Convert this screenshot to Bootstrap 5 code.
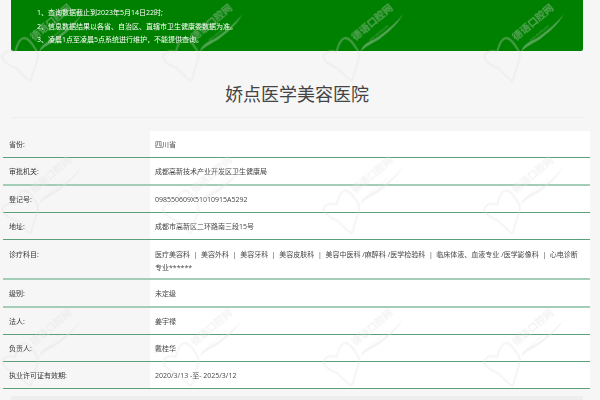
<!DOCTYPE html>
<html lang="zh-CN">
<head>
<meta charset="utf-8">
<title>娇点医学美容医院</title>
<link href="https://cdn.jsdelivr.net/npm/bootstrap@5.3.0/dist/css/bootstrap.min.css" rel="stylesheet">
<style>
html,body{height:400px;overflow:hidden}
body{background:#f6f6f6;font-family:"Open Sans","Noto Sans CJK SC",sans-serif;font-size:7px;color:#444;position:relative}
.notice-box{margin:0 17px 0 11px;height:51px;background:#008000;color:#fff;padding:6px 0 0 26px;line-height:13.5px;font-size:7px;border-radius:0 0 2px 2px}
.notice-box p{margin:0;filter:blur(.25px)}
.hosp-title{height:67px;margin:0 17px 0 11px;border-bottom:1px solid #eee;font-size:18px;line-height:18px;padding-top:33px;color:#444;text-align:center;font-weight:400;font-family:"Noto Sans CJK SC",sans-serif}
.info-wrap{margin:13px 10px 0 3px}
.info-table{--bs-table-bg:transparent;margin:0;font-size:7px;table-layout:fixed;width:100%;border-collapse:separate;border-spacing:0}
.info-table th,.info-table td{padding:1px 0 0;vertical-align:middle;border-bottom:1px solid #5b9f7d;box-shadow:none;height:27px;line-height:13px;color:#444}
.info-table th{width:147px;padding-left:6px;background:#f6f6f6;font-weight:400;color:#333}
.info-table td{background:#fff;padding:1px 9px 0 5px}
.info-table tr.soft th,.info-table tr.soft td{border-bottom:2px solid #a3cdb6;height:28px}
.info-table tr.tall th,.info-table tr.tall td{height:40px;vertical-align:top;padding-top:8px}
.cell-txt{display:inline-block;filter:blur(.25px)}
.foot-bar{margin:7px 17px 0 11px;height:4px;background:#eee}
.wm-layer{position:absolute;left:0;top:0;width:600px;height:400px;pointer-events:none}
.wm-name{font:700 10px "Liberation Serif","Noto Sans CJK SC",serif}
.wm-url{font:3px "Liberation Sans",sans-serif}
</style>
</head>
<body>
<div class="notice-box">
  <p>1、查询数据截止到2023年5月14日22时;</p>
  <p>2、信息数据结果以各省、自治区、直辖市卫生健康委数据为准。</p>
  <p>3、凌晨1点至凌晨5点系统进行维护，不能提供查询。</p>
</div>
<h1 class="hosp-title">娇点医学美容医院</h1>
<div class="info-wrap">
  <table class="table info-table">
    <tbody>
      <tr><th><span class="cell-txt">省份:</span></th><td><span class="cell-txt">四川省</span></td></tr>
      <tr class="soft"><th><span class="cell-txt">审批机关:</span></th><td><span class="cell-txt">成都高新技术产业开发区卫生健康局</span></td></tr>
      <tr><th><span class="cell-txt">登记号:</span></th><td><span class="cell-txt">098550609X51010915A5292</span></td></tr>
      <tr><th><span class="cell-txt">地址:</span></th><td><span class="cell-txt">成都市高新区二环路南三段15号</span></td></tr>
      <tr class="soft tall"><th><span class="cell-txt">诊疗科目:</span></th><td><span class="cell-txt">医疗美容科 &nbsp;|&nbsp; 美容外科 &nbsp;|&nbsp; 美容牙科 &nbsp;|&nbsp; 美容皮肤科 &nbsp;|&nbsp; 美容中医科 /麻醉科 /医学检验科 &nbsp;|&nbsp; 临床体液、血液专业 /医学影像科 &nbsp;|&nbsp; 心电诊断专业******</span></td></tr>
      <tr class="soft"><th><span class="cell-txt">级别:</span></th><td><span class="cell-txt">未定级</span></td></tr>
      <tr><th><span class="cell-txt">法人:</span></th><td><span class="cell-txt">姜宇禄</span></td></tr>
      <tr><th><span class="cell-txt">负责人:</span></th><td><span class="cell-txt">戴桂华</span></td></tr>
      <tr><th><span class="cell-txt">执业许可证有效期:</span></th><td><span class="cell-txt">2020/3/13 -至- 2025/3/12</span></td></tr>
    </tbody>
  </table>
</div>
<div class="foot-bar"></div>
<svg class="wm-layer" viewBox="0 0 600 400" aria-hidden="true">
  <defs>
    <pattern id="wmTile" x="-2" y="0" width="160.67" height="152.5" patternUnits="userSpaceOnUse">
      <g fill="none" stroke="#e0e0e0" opacity=".3">
        <path stroke-width="2" d="M4 57C6 51 12 50 17 52C19 45 22 38 26 38C31 38 35 45 38 50C41 53 40 60 37 66C35 72 34 79 32 81C27 77 22 73 18 68C12 66 6 63 4 57Z"/>
      </g>
      <g fill="#e0e0e0" opacity=".38">
        <path d="M41 52C44 42 52 42 60 36C68 30 76 24 84 14C77 26 68 33 60 39C52 44 46 46 41 52Z"/>
        <text class="wm-name" transform="translate(36 41) rotate(-40)">德语口腔网</text>
        <text class="wm-url" transform="translate(51 41) rotate(-39)">www.deyukq.com</text>
      </g>
    </pattern>
  </defs>
  <rect width="600" height="400" fill="url(#wmTile)"/>
</svg>
<script src="https://cdn.jsdelivr.net/npm/bootstrap@5.3.0/dist/js/bootstrap.bundle.min.js"></script>
</body>
</html>
